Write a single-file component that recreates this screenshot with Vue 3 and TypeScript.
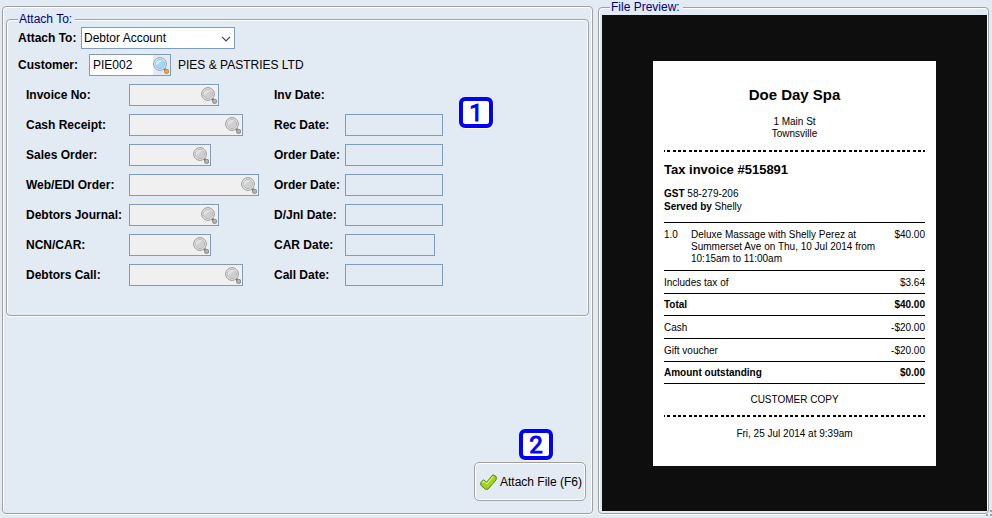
<script setup lang="ts">
import { ref } from 'vue'

interface LookupRow {
  id: string
  label: string
  size: 'xs' | 'sm' | 'md' | 'lg'
  dateLabel: string
  date: '' | 'short' | 'full'
}

const target = ref('Debtor Account')
const targets: string[] = ['Debtor Account', 'Creditor Account', 'Stock Item']
const customer = ref('PIE002')

const rows: LookupRow[] = [
  { id: 'invoice', label: 'Invoice No:', size: 'sm', dateLabel: 'Inv Date:', date: '' },
  { id: 'receipt', label: 'Cash Receipt:', size: 'md', dateLabel: 'Rec Date:', date: 'full' },
  { id: 'sales', label: 'Sales Order:', size: 'xs', dateLabel: 'Order Date:', date: 'full' },
  { id: 'web', label: 'Web/EDI Order:', size: 'lg', dateLabel: 'Order Date:', date: 'full' },
  { id: 'journal', label: 'Debtors Journal:', size: 'sm', dateLabel: 'D/Jnl Date:', date: 'full' },
  { id: 'ncn', label: 'NCN/CAR:', size: 'xs', dateLabel: 'CAR Date:', date: 'short' },
  { id: 'call', label: 'Debtors Call:', size: 'md', dateLabel: 'Call Date:', date: 'full' },
]

const totals: { label: string; amount: string; strong?: boolean }[] = [
  { label: 'Includes tax of', amount: '$3.64' },
  { label: 'Total', amount: '$40.00', strong: true },
  { label: 'Cash', amount: '-$20.00' },
  { label: 'Gift voucher', amount: '-$20.00' },
  { label: 'Amount outstanding', amount: '$0.00', strong: true },
]
</script>

<template>
  <main class="window">
    <section class="panel etched">
      <fieldset class="group etched">
        <legend>Attach To:</legend>
        <div class="line">
          <label class="target-label" for="target">Attach To:</label>
          <span class="select-box">
            <select id="target" v-model="target">
              <option v-for="t in targets" :key="t">{{ t }}</option>
            </select>
            <svg class="chevron" viewBox="0 0 10 6" aria-hidden="true">
              <path d="M1 .8 5 4.8 9 .8" fill="none" stroke="#444" stroke-width="1.2" />
            </svg>
          </span>
        </div>
        <div class="line customer">
          <label class="customer-label" for="customer">Customer:</label>
          <span class="lookup active">
            <input id="customer" v-model="customer" type="text" />
            <button type="button" aria-label="Find customer">
              <svg viewBox="0 0 16 17" aria-hidden="true">
                <path d="M10.8 11.4 13 13.6" stroke="#7d7d7d" stroke-width="2.4" />
                <circle cx="7" cy="7" r="6.3" fill="#fff" stroke="#8d979f" />
                <circle cx="7" cy="7" r="4.7" fill="#9fd8fa" stroke="#7cb3da" stroke-width=".8" />
                <path d="M2.9 8.6A4.4 4.4 0 0 1 9.6 3.6Z" fill="#cdecfd" />
                <rect x="11.6" y="12.4" width="4" height="4" rx="1.4" fill="#f2a53c" stroke="#a5854f" stroke-width=".8" />
              </svg>
            </button>
          </span>
          <output for="customer">PIES &amp; PASTRIES LTD</output>
        </div>
        <div class="rows">
          <template v-for="row in rows" :key="row.id">
            <label :for="row.id">{{ row.label }}</label>
            <span class="lookup" :class="row.size">
              <input :id="row.id" type="text" disabled />
              <button type="button" disabled :aria-label="'Find ' + row.label">
                <svg viewBox="0 0 16 17" aria-hidden="true">
                  <path d="M10.8 11.4 13 13.6" stroke="#7d7d7d" stroke-width="2.4" />
                  <circle cx="7" cy="7" r="6.3" fill="#fff" stroke="#8a8a8a" />
                  <circle cx="7" cy="7" r="4.7" fill="#cfcfcf" stroke="#a6a6a6" stroke-width=".8" />
                  <path d="M2.9 8.6A4.4 4.4 0 0 1 9.6 3.6Z" fill="#e2e2e2" />
                  <rect x="11.6" y="12.4" width="4" height="4" rx="1.4" fill="#b4b4b4" stroke="#808080" stroke-width=".8" />
                </svg>
              </button>
            </span>
            <label v-if="row.date" :for="row.id + '-date'">{{ row.dateLabel }}</label>
            <b v-else>{{ row.dateLabel }}</b>
            <input v-if="row.date" :id="row.id + '-date'" class="date" :class="row.date" type="text" readonly />
            <span v-else></span>
          </template>
        </div>
        <span class="badge badge-fields">1</span>
      </fieldset>

      <div class="actions">
        <span class="badge badge-action">2</span>
        <button class="attach" type="button">
          <svg viewBox="0 0 17 16" aria-hidden="true">
            <path d="M.8 8.6 3.4 5.8 6.6 8.2 12.8.8 16.2 2.6V5.6L8 15.2H5.4L.8 11.2Z" fill="#a2d51a" stroke="#55801a" stroke-linejoin="round" />
            <path d="M2.2 8.8 3.6 7.4 6.8 10 13.2 2.4" fill="none" stroke="#d4f070" stroke-width="1.2" />
          </svg>
          <span>Attach File (F6)</span>
        </button>
      </div>
    </section>

    <fieldset class="preview etched">
      <legend>File Preview:</legend>
      <div class="stage">
        <article class="receipt">
          <h1>Doe Day Spa</h1>
          <p class="address">1 Main St<br />Townsville</p>
          <div class="dashes"></div>
          <h2>Tax invoice #515891</h2>
          <p class="meta"><b>GST</b> 58-279-206<br /><b>Served by</b> Shelly</p>
          <table>
            <tbody>
              <tr class="item">
                <td class="qty">1.0</td>
                <td>Deluxe Massage with Shelly Perez at Summerset Ave on Thu, 10 Jul 2014 from 10:15am to 11:00am</td>
                <td class="amount">$40.00</td>
              </tr>
              <tr v-for="t in totals" :key="t.label" :class="{ strong: t.strong }">
                <td colspan="2">{{ t.label }}</td>
                <td class="amount">{{ t.amount }}</td>
              </tr>
            </tbody>
          </table>
          <p class="copy">CUSTOMER COPY</p>
          <div class="dashes"></div>
          <p class="printed">Fri, 25 Jul 2014 at 9:39am</p>
        </article>
      </div>
    </fieldset>
    <span class="grip" aria-hidden="true"></span>
  </main>
</template>

<style>
body {
  margin: 0;
  background: #e2eaf3;
}
</style>

<style scoped>
* {
  box-sizing: border-box;
}

.window {
  position: relative;
  display: grid;
  grid-template-columns: 591fr 391fr;
  gap: 5px;
  min-height: 100vh;
  padding: 0 3px 4px 2px;
  background: #e2eaf3;
  color: #000;
  font: 12px/14px "Liberation Sans", Arial, sans-serif;
}

.etched {
  margin: 0;
  border: 1px solid #a0a0a0;
  border-radius: 4px;
  box-shadow: inset 1px 1px #fff, inset -1px 0 #fff, 0 1px #fff;
}

.panel {
  display: flex;
  flex-direction: column;
  margin-top: 6px;
  padding: 5px 3px 12px;
}

legend {
  padding: 0 3px 0 1px;
  background: #e2eaf3;
  color: #00007f;
}

.group {
  position: relative;
  padding: 1px 11px 29px;
}

input,
select,
button {
  margin: 0;
  color: inherit;
  font: inherit;
}

label,
b {
  font-weight: bold;
}

.line {
  display: flex;
  align-items: center;
}

.target-label {
  width: 63px;
}

.customer-label {
  width: 71px;
}

.customer {
  margin: 5px 0 8px;
}

.customer output {
  margin-left: 7px;
}

.select-box {
  position: relative;
  display: flex;
  width: 154px;
}

select {
  width: 100%;
  height: 22px;
  padding: 0 18px 0 2px;
  border: 1px solid #7f9db9;
  border-radius: 0;
  background: #fff;
  appearance: none;
}

.chevron {
  position: absolute;
  top: 9px;
  right: 4px;
  width: 10px;
  height: 6px;
  pointer-events: none;
}

.lookup {
  display: flex;
  height: 22px;
  border: 1px solid #7f9db9;
  background: #f0f0f0;
}

.lookup input {
  flex: 1;
  min-width: 0;
  padding: 0 3px;
  border: 0;
  background: transparent;
}

.lookup button {
  width: 17px;
  padding: 1px 0 0;
  border: 0;
  background: transparent;
}

.lookup svg {
  display: block;
  width: 16px;
  height: 17px;
}

.active {
  width: 82px;
  background: #fff;
}

.active button {
  background: #e2eaf3;
}

.xs {
  width: 82px;
}

.sm {
  width: 90px;
}

.md {
  width: 114px;
}

.lg {
  width: 130px;
}

.rows {
  display: grid;
  grid-template-columns: 103px 145px 71px 1fr;
  grid-auto-rows: 22px;
  row-gap: 8px;
  align-items: center;
  padding-left: 8px;
}

.date {
  height: 22px;
  padding: 0 3px;
  border: 1px solid #7f9db9;
  background: transparent;
}

.full {
  width: 98px;
}

.short {
  width: 90px;
}

.badge {
  position: absolute;
  display: grid;
  place-items: center;
  width: 34px;
  height: 31px;
  border: 4px solid #00f;
  border-radius: 6px;
  background: #fff;
  box-shadow: 1px 1px #fff;
  color: #00f;
  font-family: Roboto, "Liberation Sans", sans-serif;
  font-size: 24px;
  line-height: 24px;
  -webkit-text-stroke: 1px #00f;
}

.badge-fields {
  top: 71px;
  left: 452px;
}

.actions {
  position: relative;
  align-self: flex-end;
  margin-top: auto;
  margin-right: 3px;
}

.badge-action {
  bottom: 41px;
  left: 45px;
}

.attach {
  display: flex;
  align-items: center;
  gap: 3px;
  height: 39px;
  padding: 0 3px 0 5px;
  border: 1px solid #a0a0a0;
  border-radius: 5px;
  background: #e2eaf3;
  box-shadow: inset 0 0 0 1px #fff;
  white-space: nowrap;
}

.attach svg {
  width: 17px;
  height: 16px;
}

.preview {
  display: flex;
  min-width: 0;
  padding: 0 1px 2px 3px;
}

.preview legend {
  margin-left: 8px;
}

.stage {
  display: flex;
  flex: 1;
  align-items: center;
  justify-content: center;
  margin-top: 1px;
  background: #0e0e0e;
}

.receipt {
  width: 283px;
  padding: 25px 11px 26px;
  background: #fff;
  font-size: 10px;
  line-height: 12px;
}

.receipt h1,
.receipt h2,
.receipt p {
  margin: 0;
}

.receipt h1 {
  font-size: 15px;
  line-height: 18px;
  text-align: center;
}

.receipt h2 {
  margin-top: 9px;
  font-size: 13px;
  line-height: 18px;
}

.receipt .address {
  margin: 12px 0 10px;
  text-align: center;
}

.receipt .meta {
  margin: 8px 0 9px;
  line-height: 13px;
}

.receipt .copy {
  margin: 10px 0 9px;
  text-align: center;
}

.receipt .printed {
  margin-top: 11px;
  text-align: center;
}

.dashes {
  height: 2px;
  background: repeating-linear-gradient(
    90deg,
    #000 0 1px,
    transparent 1px 3px,
    #000 3px 6px,
    transparent 6px 9px,
    #000 9px 12px,
    transparent 12px 14px,
    #000 14px 16px
  );
}

table {
  width: 100%;
  border-top: 1px solid #000;
  border-spacing: 0;
}

td {
  height: 23px;
  padding: 2px 0 0;
  border-bottom: 1px solid #000;
}

.strong td {
  height: 22px;
  font-weight: bold;
}

.item td {
  padding: 6px 0 5px;
  vertical-align: top;
}

.qty {
  width: 27px;
}

.amount {
  width: 44px;
  text-align: right;
}

.grip {
  position: absolute;
  right: 0;
  bottom: 2px;
  width: 6px;
  height: 6px;
  background:
    linear-gradient(#a0a0a0, #a0a0a0) 4px 0 / 2px 2px no-repeat,
    linear-gradient(#a0a0a0, #a0a0a0) 0 4px / 2px 2px no-repeat,
    linear-gradient(#a0a0a0, #a0a0a0) 4px 4px / 2px 2px no-repeat;
}
</style>
